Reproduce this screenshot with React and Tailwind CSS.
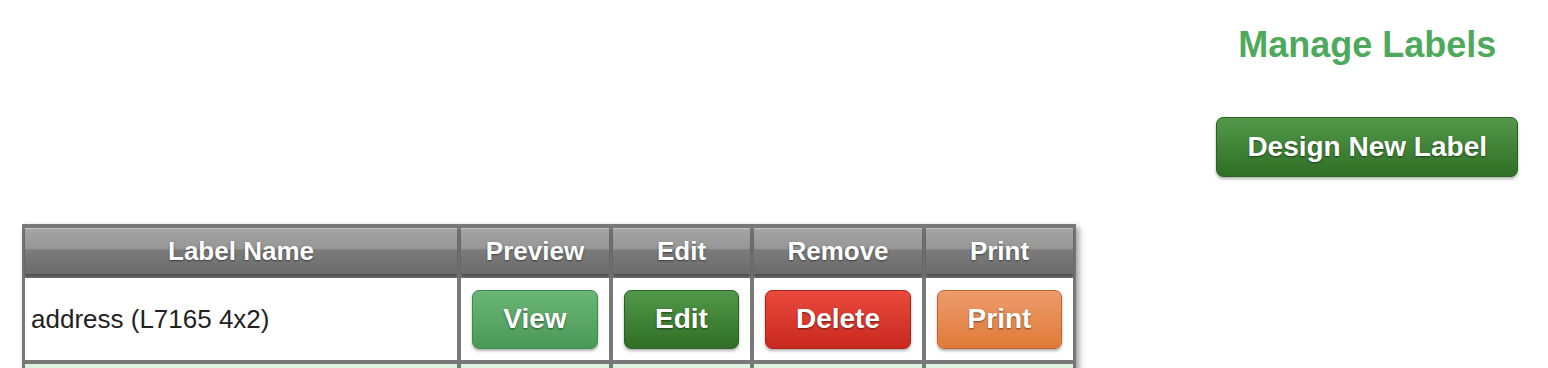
import React from "react";

const btnBase =
  "inline-flex items-center justify-center whitespace-nowrap h-[59px] px-[30px] rounded-[7px] border text-white font-bold text-[28px] leading-none [text-shadow:0_1px_2px_rgba(0,0,0,0.5)] shadow-[0_2px_3px_rgba(0,0,0,0.3)]";

function HeaderCell({ children }) {
  return (
    <div className="h-[46px] flex items-center justify-center border-t border-[#c4c4c4] bg-[linear-gradient(to_bottom,#a4a4a4_0%,#969696_44%,#7c7c7c_46%,#6b6b6b_100%)] shadow-[0_3px_3px_rgba(0,0,0,0.35)] text-white font-bold text-[26px] [text-shadow:0_1px_2px_rgba(0,0,0,0.5)]">
      {children}
    </div>
  );
}

function BodyCell({ children, className = "" }) {
  return (
    <div className={"h-[82px] bg-white flex items-center " + className}>
      {children}
    </div>
  );
}

export default function App() {
  return (
    <div className="w-full bg-white font-['Liberation_Sans',Arial,sans-serif]">
      <div className="flex justify-end pr-[30px]">
        <div className="w-max flex flex-col items-center pt-[24px]">
          <h1 className="text-[36px] leading-[42px] font-bold text-[#4ea95c] whitespace-nowrap">
            Manage Labels
          </h1>
          <button
            className={
              btnBase +
              " mt-[51px] h-[60px] border-[#2b6124] bg-[linear-gradient(to_bottom,#52984a_0%,#2f6f25_100%)]"
            }
          >
            Design New Label
          </button>
        </div>
      </div>

      <div className="pl-[22px] mt-[47px]">
        <div className="inline-grid grid-cols-[432px_148px_137px_168px_147px] gap-[4px] pt-[4px] px-[3px] pb-[3px] bg-[#787878] shadow-[3px_3px_6px_rgba(0,0,0,0.4)]">
          <HeaderCell>Label Name</HeaderCell>
          <HeaderCell>Preview</HeaderCell>
          <HeaderCell>Edit</HeaderCell>
          <HeaderCell>Remove</HeaderCell>
          <HeaderCell>Print</HeaderCell>

          <BodyCell className="pl-[6px] text-[26px] text-[#222]">
            address (L7165 4x2)
          </BodyCell>
          <BodyCell className="justify-center">
            <button
              className={
                btnBase +
                " border-[#3e8a49] bg-[linear-gradient(to_bottom,#6ab576_0%,#4b9956_100%)]"
              }
            >
              View
            </button>
          </BodyCell>
          <BodyCell className="justify-center">
            <button
              className={
                btnBase +
                " border-[#2b6124] bg-[linear-gradient(to_bottom,#52984a_0%,#2f6f25_100%)]"
              }
            >
              Edit
            </button>
          </BodyCell>
          <BodyCell className="justify-center">
            <button
              className={
                btnBase +
                " border-[#a8221a] bg-[linear-gradient(to_bottom,#ea4a3d_0%,#c9281e_100%)]"
              }
            >
              Delete
            </button>
          </BodyCell>
          <BodyCell className="justify-center">
            <button
              className={
                btnBase +
                " border-[#c2652d] bg-[linear-gradient(to_bottom,#ed9c6c_0%,#e07a38_100%)]"
              }
            >
              Print
            </button>
          </BodyCell>

          <div className="h-[82px] bg-[#dff4e0]" />
          <div className="h-[82px] bg-[#dff4e0]" />
          <div className="h-[82px] bg-[#dff4e0]" />
          <div className="h-[82px] bg-[#dff4e0]" />
          <div className="h-[82px] bg-[#dff4e0]" />
        </div>
      </div>
    </div>
  );
}
